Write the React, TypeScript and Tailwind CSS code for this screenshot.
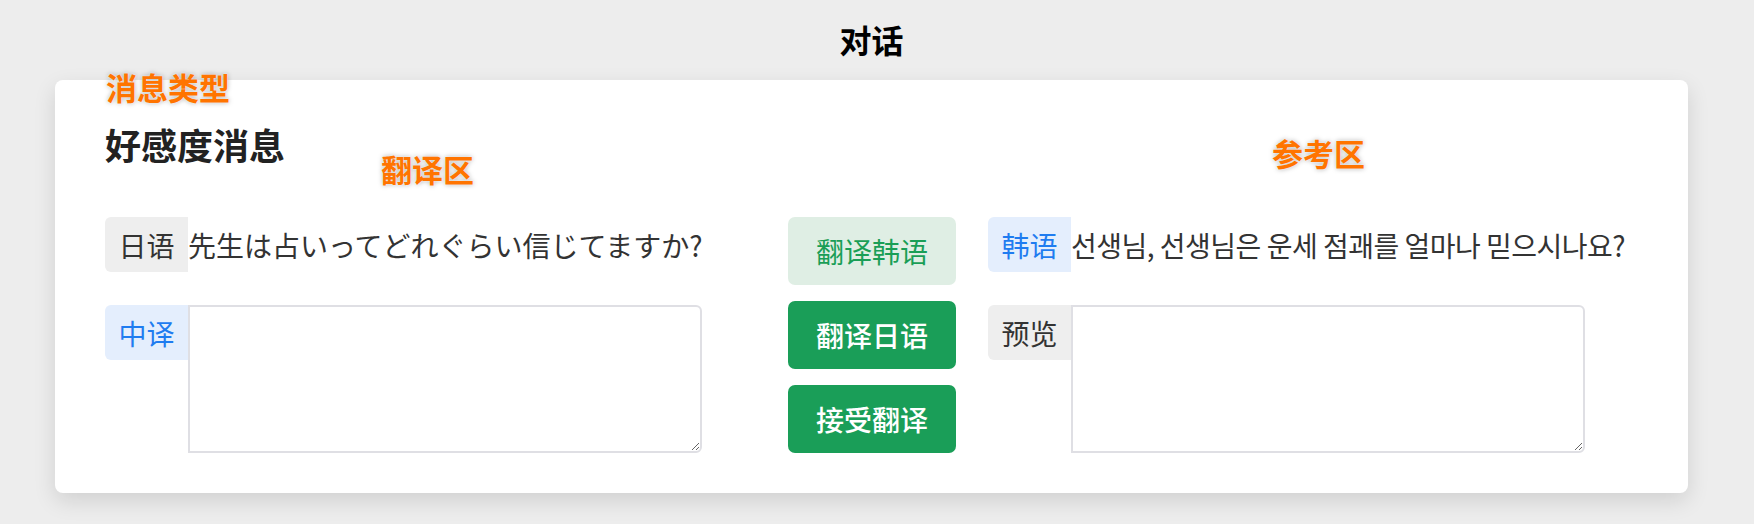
import React from "react";

const zh = "font-['Noto_Sans_CJK_SC',sans-serif]";

const Badge = ({ text, tone }: { text: string; tone: "gray" | "blue" }) => (
  <div
    className={`flex h-[55px] w-[83px] shrink-0 items-center justify-center rounded-l-[6px] text-[28px] ${
      tone === "blue" ? "bg-[#e4eefd] text-[#1f7cf0]" : "bg-[#eeeeee] text-[#333333]"
    }`}
  >
    {text}
  </div>
);

const Note = ({ text, className }: { text: string; className: string }) => (
  <span
    className={`absolute text-[31px] leading-none font-semibold text-[#ff7400] [text-shadow:0_0_2px_#fff,0_0_5px_rgba(0,0,0,0.35)] ${className}`}
  >
    {text}
  </span>
);

const App = () => {
  return (
    <div className={`min-h-[524px] w-full bg-[#ededed] ${zh}`}>
      <div className="w-[1743px]">
        <h1 className="pt-[21px] text-center text-[32px] leading-[36px] font-bold text-black">
          对话
        </h1>

        <div className="relative mx-[55px] mt-[23px] rounded-[8px] bg-white pt-[40px] pb-[40px] pl-[50px] shadow-[0_8px_22px_rgba(0,0,0,0.12)]">
          <Note text="消息类型" className="left-[51px] top-[-9px]" />
          <Note text="翻译区" className="left-[326px] top-[73px]" />
          <Note text="参考区" className="left-[1217px] top-[57px]" />

          <h2 className="text-[36px] leading-[48px] font-semibold text-[#222222]">
            好感度消息
          </h2>

          <div className="mt-[49px] flex">
            {/* 翻译区 */}
            <div className="flex w-[683px] flex-col gap-[33px]">
              <div className="flex items-center">
                <Badge text="日语" tone="gray" />
                <span className="font-['Noto_Sans_CJK_JP',sans-serif] text-[28px] text-[#333333]">
                  先生は占いってどれぐらい信じてますか?
                </span>
              </div>
              <div className="flex items-start">
                <Badge text="中译" tone="blue" />
                <textarea className="h-[148px] w-[514px] rounded-r-[6px] border-2 border-[#dfdfe4] bg-white outline-none" />
              </div>
            </div>

            {/* 按钮 */}
            <div className="flex w-[168px] flex-col gap-[16px]">
              <button className="h-[68px] rounded-[7px] bg-[#dfeee4] text-[28px] text-[#1a9e56]">
                翻译韩语
              </button>
              <button className="h-[68px] rounded-[7px] bg-[#1a9e58] text-[28px] font-medium text-white">
                翻译日语
              </button>
              <button className="h-[68px] rounded-[7px] bg-[#1a9e58] text-[28px] font-medium text-white">
                接受翻译
              </button>
            </div>

            {/* 参考区 */}
            <div className="ml-[32px] flex flex-col gap-[33px]">
              <div className="flex items-center">
                <Badge text="韩语" tone="blue" />
                <span className="font-['Noto_Sans_CJK_KR',sans-serif] text-[28px] tracking-[-0.5px] text-[#333333]">
                  선생님, 선생님은 운세 점괘를 얼마나 믿으시나요?
                </span>
              </div>
              <div className="flex items-start">
                <Badge text="预览" tone="gray" />
                <textarea className="h-[148px] w-[514px] rounded-r-[6px] border-2 border-[#dfdfe4] bg-white outline-none" />
              </div>
            </div>
          </div>
        </div>
      </div>
    </div>
  );
};

export default App;
